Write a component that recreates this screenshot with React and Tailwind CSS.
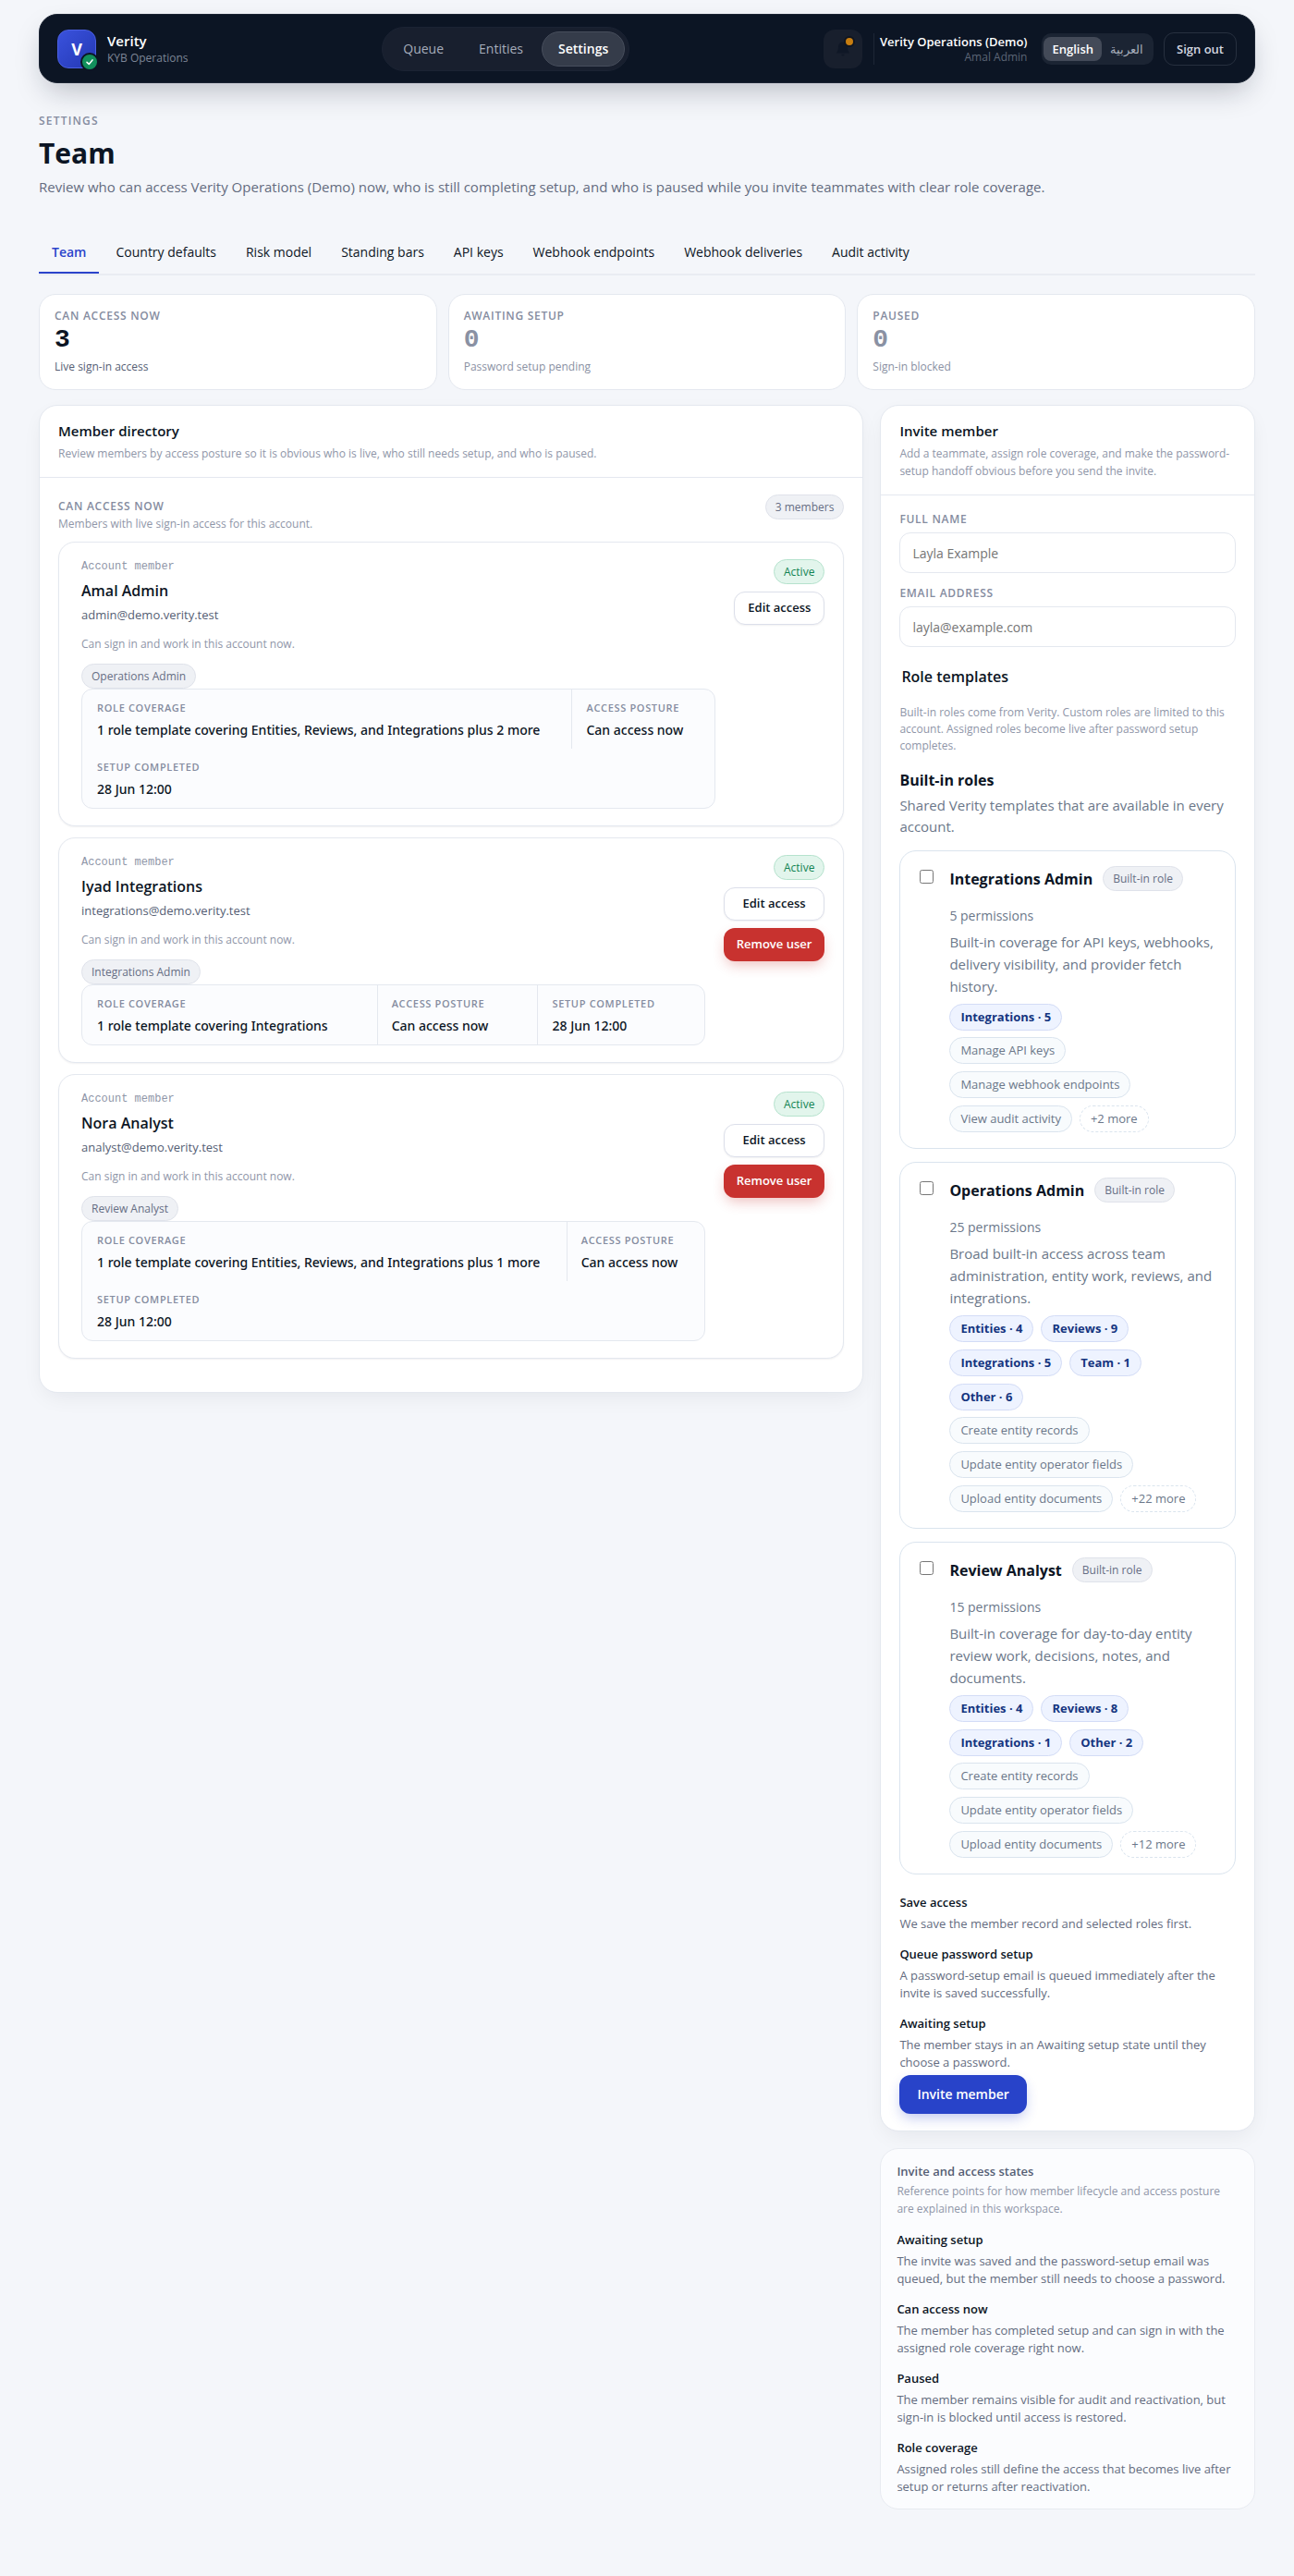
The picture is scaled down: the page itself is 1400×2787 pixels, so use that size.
import { useState } from 'react'

const NAV = ['Queue', 'Entities', 'Settings']

const TABS = [
  'Team',
  'Country defaults',
  'Risk model',
  'Standing bars',
  'API keys',
  'Webhook endpoints',
  'Webhook deliveries',
  'Audit activity',
]

const STATS = [
  { label: 'Can access now', value: 3, note: 'Live sign-in access' },
  { label: 'Awaiting setup', value: 0, note: 'Password setup pending' },
  { label: 'Paused', value: 0, note: 'Sign-in blocked' },
]

const MEMBERS = [
  {
    name: 'Amal Admin',
    email: 'admin@demo.verity.test',
    role: 'Operations Admin',
    coverage: '1 role template covering Entities, Reviews, and Integrations plus 2 more',
    removable: false,
  },
  {
    name: 'Iyad Integrations',
    email: 'integrations@demo.verity.test',
    role: 'Integrations Admin',
    coverage: '1 role template covering Integrations',
    removable: true,
  },
  {
    name: 'Nora Analyst',
    email: 'analyst@demo.verity.test',
    role: 'Review Analyst',
    coverage: '1 role template covering Entities, Reviews, and Integrations plus 1 more',
    removable: true,
  },
]

const ROLES = [
  {
    name: 'Integrations Admin',
    count: 5,
    description: 'Built-in coverage for API keys, webhooks, delivery visibility, and provider fetch history.',
    groups: ['Integrations · 5'],
    permissions: ['Manage API keys', 'Manage webhook endpoints', 'View audit activity'],
    more: 2,
  },
  {
    name: 'Operations Admin',
    count: 25,
    description: 'Broad built-in access across team administration, entity work, reviews, and integrations.',
    groups: ['Entities · 4', 'Reviews · 9', 'Integrations · 5', 'Team · 1', 'Other · 6'],
    permissions: ['Create entity records', 'Update entity operator fields', 'Upload entity documents'],
    more: 22,
  },
  {
    name: 'Review Analyst',
    count: 15,
    description: 'Built-in coverage for day-to-day entity review work, decisions, notes, and documents.',
    groups: ['Entities · 4', 'Reviews · 8', 'Integrations · 1', 'Other · 2'],
    permissions: ['Create entity records', 'Update entity operator fields', 'Upload entity documents'],
    more: 12,
  },
]

const STEPS = [
  { title: 'Save access', text: 'We save the member record and selected roles first.' },
  {
    title: 'Queue password setup',
    text: 'A password-setup email is queued immediately after the invite is saved successfully.',
  },
  {
    title: 'Awaiting setup',
    text: 'The member stays in an Awaiting setup state until they choose a password.',
  },
]

const STATES = [
  {
    title: 'Awaiting setup',
    text: 'The invite was saved and the password-setup email was queued, but the member still needs to choose a password.',
  },
  {
    title: 'Can access now',
    text: 'The member has completed setup and can sign in with the assigned role coverage right now.',
  },
  {
    title: 'Paused',
    text: 'The member remains visible for audit and reactivation, but sign-in is blocked until access is restored.',
  },
  {
    title: 'Role coverage',
    text: 'Assigned roles still define the access that becomes live after setup or returns after reactivation.',
  },
]

function Header() {
  const [lang, setLang] = useState('en')

  return (
    <header className="flex h-[75px] items-center justify-between rounded-[20px] border border-[#1b2433] bg-[#0c1524] px-[19px] shadow-[0_14px_32px_-8px_rgba(15,23,42,0.28)]">
      <div className="flex items-center gap-3">
        <div className="relative flex size-[42px] items-center justify-center rounded-xl border border-[#4a5fe0] bg-linear-to-br from-[#3a52dd] to-[#2438b4] text-lg font-bold text-white">
          V
          <span className="absolute -right-1 -bottom-1 flex size-5 items-center justify-center rounded-full border-2 border-[#0c1524] bg-[#12905c]">
            <svg viewBox="0 0 16 16" className="size-3" fill="none" stroke="#fff" strokeWidth="2" strokeLinecap="round" strokeLinejoin="round">
              <path d="M4 8.5 7 11.2 12 5.2" />
            </svg>
          </span>
        </div>
        <div>
          <div className="text-[15px] leading-5 font-semibold text-white">Verity</div>
          <div className="text-xs leading-[18px] text-[#7d8596]">KYB Operations</div>
        </div>
      </div>

      <nav className="flex gap-0.5 rounded-full border border-[#1b2333] bg-[#181f2e] p-1">
        {NAV.map((item) => (
          <a
            key={item}
            href="#"
            className={`rounded-full border px-[17px] py-2 text-sm leading-5 ${
              item === 'Settings'
                ? 'border-[#474e5c] bg-[#353c4a] font-semibold text-white'
                : 'border-transparent font-medium text-[#a6adbb]'
            }`}
          >
            {item}
          </a>
        ))}
      </nav>

      <div className="flex items-center">
        <button aria-label="Notifications" className="relative flex size-[42px] items-center justify-center rounded-xl bg-[#181f2d]">
          <svg viewBox="0 0 24 24" className="size-5" fill="#0f1726">
            <path d="M12 3a6 6 0 0 0-6 6c0 5-2 7-2.5 8.5h17C20 16 18 14 18 9a6 6 0 0 0-6-6zM10 19h4a2 2 0 0 1-4 0z" />
          </svg>
          <span className="absolute top-[7px] right-2 size-3 rounded-full border-2 border-[#10151f] bg-[#c77d10]" />
        </button>
        <div className="ml-3 border-l border-[#1d2636] pl-1.5 text-right">
          <div className="text-[13px] leading-[18px] font-semibold text-white">Verity Operations (Demo)</div>
          <div className="text-xs leading-4 text-[#5c6576]">Amal Admin</div>
        </div>
        <div className="ml-4 flex rounded-[10px] bg-[#1b2433] px-0.5 py-1">
          <button
            onClick={() => setLang('en')}
            className={`rounded-lg px-[9px] py-1 text-[13px] leading-[18px] ${lang === 'en' ? 'bg-[#434a58] font-semibold text-white' : 'text-[#a6adbb]'}`}
          >
            English
          </button>
          <button
            onClick={() => setLang('ar')}
            className={`rounded-lg px-[9px] py-1 text-[13px] leading-[18px] ${lang === 'ar' ? 'bg-[#434a58] font-semibold text-white' : 'text-[#a6adbb]'}`}
          >
            العربية
          </button>
        </div>
        <button className="ml-[11px] rounded-[11px] border border-[#27303f] px-[13px] py-2 text-[13px] leading-[18px] font-semibold text-[#d4d8e0]">
          Sign out
        </button>
      </div>
    </header>
  )
}

function StatCard({ label, value, note }) {
  return (
    <div className="rounded-[18px] border border-[#e4e8ef] bg-white px-4 py-[15px]">
      <div className="text-xs leading-4 font-semibold tracking-[0.06em] text-[#858ca0] uppercase">{label}</div>
      <div className={`font-['Liberation_Mono',monospace] text-[28px] leading-[36px] font-bold ${value ? 'text-[#0c1524]' : 'text-[#8a91a3]'}`}>
        {value}
      </div>
      <div className={`mt-0.5 text-xs leading-[18px] ${value ? 'text-[#555e74]' : 'text-[#8a91a3]'}`}>{note}</div>
    </div>
  )
}

function Pill({ children, tone = 'gray' }) {
  const tones = {
    gray: 'border-[#dfe2ea] bg-[#eff1f5] text-[#666e84]',
    green: 'border-[#b5e2cd] bg-[#e2f5ec] text-[#128453]',
  }
  return (
    <span className={`inline-flex h-[27px] items-center rounded-full border px-2.5 text-xs font-medium ${tones[tone]}`}>
      {children}
    </span>
  )
}

function PanelHeader({ title, text }) {
  return (
    <div className="border-b border-[#e4e8ef] px-5 py-4">
      <h2 className="text-[15px] leading-[22px] font-semibold text-[#0c1524]">{title}</h2>
      <p className="mt-1 text-xs leading-[19px] text-[#8f96a8]">{text}</p>
    </div>
  )
}

function MetaCell({ label, value }) {
  return (
    <div className="-mr-px flex-auto border-r border-[#e4e8ef] px-4 pt-3 pb-2.5">
      <dt className="text-[11px] leading-[15px] font-semibold tracking-[0.06em] text-[#858ca0] uppercase">{label}</dt>
      <dd className="mt-[7px] font-['Noto_Sans',sans-serif] text-sm leading-5 font-medium text-[#0c1524]">{value}</dd>
    </div>
  )
}

function MemberCard({ member }) {
  return (
    <article className="flex gap-5 rounded-[18px] border border-[#e4e8ef] bg-white py-[18px] pr-5 pl-6 shadow-[0_1px_2px_rgba(15,23,42,0.06)]">
      <div className="min-w-0 flex-1">
        <div className="font-['Liberation_Mono',monospace] text-xs leading-4 text-[#8f96a8]">Account member</div>
        <h3 className="mt-1.5 text-base leading-6 font-semibold text-[#0c1524]">{member.name}</h3>
        <div className="mt-1 text-[13px] leading-5 text-[#555e74]">{member.email}</div>
        <p className="mt-3 mb-3 text-xs leading-[19px] text-[#8f96a8]">Can sign in and work in this account now.</p>
        <div className="flex">
          <Pill>{member.role}</Pill>
        </div>
        <dl className="flex flex-wrap overflow-hidden rounded-xl border border-[#e4e8ef] bg-[#fbfcfe]">
          <MetaCell label="Role coverage" value={member.coverage} />
          <MetaCell label="Access posture" value="Can access now" />
          <MetaCell label="Setup completed" value="28 Jun 12:00" />
        </dl>
      </div>
      <div className="flex flex-col items-end gap-2">
        <Pill tone="green">Active</Pill>
        <button className="h-9 w-full rounded-xl border border-[#dcdfea] bg-white px-3.5 text-[13px] font-semibold text-[#0c1524] shadow-[0_1px_2px_rgba(15,23,42,0.06)]">
          Edit access
        </button>
        {member.removable && (
          <button className="h-9 w-full rounded-xl bg-[#c8322f] px-3.5 text-[13px] font-semibold text-white shadow-[0_6px_14px_-2px_rgba(200,50,47,0.3)]">
            Remove user
          </button>
        )}
      </div>
    </article>
  )
}

function Field({ id, label, type, placeholder }) {
  return (
    <div>
      <label htmlFor={id} className="block text-xs leading-4 font-semibold tracking-[0.06em] text-[#858ca0] uppercase">
        {label}
      </label>
      <input
        id={id}
        type={type}
        placeholder={placeholder}
        className="mt-1.5 h-11 w-full rounded-xl border border-[#e4e8ef] bg-white px-[13px] text-sm text-[#0c1524] outline-none placeholder:text-[#757575] focus:border-[#2b44cb]"
      />
    </div>
  )
}

function RoleCard({ role }) {
  return (
    <label className="flex rounded-[18px] border border-[#dae4ee] bg-white pt-4 pr-[17px] pb-[17px] pl-[21px]">
      <input type="checkbox" className="mt-1 mr-[17px] size-[15px] shrink-0" />
      <span className="min-w-0 flex-1">
        <span className="flex h-[27px] items-center gap-[11px]">
          <span className="text-base leading-6 font-bold text-[#0c1524]">{role.name}</span>
          <Pill>Built-in role</Pill>
        </span>
        <span className="mt-[15px] block text-sm leading-6 text-[#6b7789]">{role.count} permissions</span>
        <span className="mt-1 block text-[15px] leading-6 text-[#6b7789]">{role.description}</span>
        <span className="mt-[7px] flex flex-wrap gap-2">
          {role.groups.map((g) => (
            <span key={g} className="flex h-[29px] items-center rounded-full border border-[#d3dcf6] bg-[#eef3ff] px-[11px] text-[13px] font-bold text-[#15357f]">
              {g}
            </span>
          ))}
        </span>
        <span className="mt-[7px] flex flex-wrap gap-2">
          {role.permissions.map((p) => (
            <span key={p} className="flex h-[29px] items-center rounded-full border border-[#dae4ee] bg-[#f8fbfd] px-[11px] text-[13px] text-[#6b7789]">
              {p}
            </span>
          ))}
          <span className="flex h-[29px] items-center rounded-full border border-dashed border-[#dae4ee] px-[11px] text-[13px] text-[#6b7789]">
            +{role.more} more
          </span>
        </span>
      </span>
    </label>
  )
}

function Notes({ items }) {
  return (
    <dl className="flex flex-col gap-[13px]">
      {items.map((item) => (
        <div key={item.title}>
          <dt className="text-[13px] leading-5 font-semibold text-[#0c1524]">{item.title}</dt>
          <dd className="mt-1 text-[13px] leading-[19px] text-[#646c80]">{item.text}</dd>
        </div>
      ))}
    </dl>
  )
}

export default function App() {
  return (
    <div className="min-h-screen bg-[#f4f6fa] px-[3%] pt-[15px] pb-[71px] font-['Open_Sans','Noto_Sans',sans-serif] text-[#0c1524]">
      <Header />

      <main>
        <div className="mt-8">
          <div className="text-xs leading-[18px] font-semibold tracking-[0.1em] text-[#858ca0] uppercase">Settings</div>
          <h1 className="mt-1.5 text-[30px] leading-10 font-bold">Team</h1>
          <p className="mt-1 text-[15px] leading-6 text-[#646c80]">
            Review who can access Verity Operations (Demo) now, who is still completing setup, and who is paused while you invite teammates with clear role coverage.
          </p>
        </div>

        <nav className="mt-9 flex gap-1 border-b-2 border-[#e9ecf2]">
          {TABS.map((tab) => (
            <a
              key={tab}
              href="#"
              className={`border-b-2 px-3.5 pt-[13px] pb-[11px] text-sm leading-5 ${
                tab === 'Team' ? 'border-[#2b44cb] font-semibold text-[#2b44cb]' : 'border-transparent font-medium'
              }`}
            >
              {tab}
            </a>
          ))}
        </nav>

        <section className="mt-5 grid grid-cols-3 gap-3">
          {STATS.map((stat) => (
            <StatCard key={stat.label} {...stat} />
          ))}
        </section>

        <div className="mt-4 grid grid-cols-[minmax(0,2.2fr)_minmax(0,1fr)] items-start gap-[18px]">
          <section className="rounded-[20px] border border-[#e4e8ef] bg-white shadow-[0_8px_24px_-6px_rgba(15,23,42,0.08)]">
            <PanelHeader
              title="Member directory"
              text="Review members by access posture so it is obvious who is live, who still needs setup, and who is paused."
            />
            <div className="px-5 pt-[18px] pb-9">
              <div className="mb-2.5 flex items-start justify-between">
                <div className="pt-1">
                  <h3 className="text-xs leading-[18px] font-semibold tracking-[0.06em] text-[#858ca0] uppercase">Can access now</h3>
                  <p className="text-xs leading-[19px] text-[#8f96a8]">Members with live sign-in access for this account.</p>
                </div>
                <Pill>3 members</Pill>
              </div>
              <div className="flex flex-col gap-3">
                {MEMBERS.map((member) => (
                  <MemberCard key={member.email} member={member} />
                ))}
              </div>
            </div>
          </section>

          <div className="flex flex-col gap-[18px]">
            <section className="rounded-[20px] border border-[#e4e8ef] bg-white shadow-[0_8px_24px_-6px_rgba(15,23,42,0.08)]">
              <PanelHeader
                title="Invite member"
                text="Add a teammate, assign role coverage, and make the password-setup handoff obvious before you send the invite."
              />
              <form className="px-5 py-[18px]" onSubmit={(e) => e.preventDefault()}>
                <div className="flex flex-col gap-3.5">
                  <Field id="full-name" label="Full name" type="text" placeholder="Layla Example" />
                  <Field id="email" label="Email address" type="email" placeholder="layla@example.com" />
                </div>

                <fieldset className="mt-5">
                  <legend className="px-0.5 text-base leading-6 font-semibold">Role templates</legend>
                  <p className="mt-[18px] text-xs leading-[18px] text-[#8f96a8]">
                    Built-in roles come from Verity. Custom roles are limited to this account. Assigned roles become live after password setup completes.
                  </p>
                  <h3 className="mt-4 text-base leading-6 font-bold">Built-in roles</h3>
                  <p className="mt-1 text-[15px] leading-[23px] text-[#6b7789]">
                    Shared Verity templates that are available in every account.
                  </p>
                  <div className="mt-3.5 flex flex-col gap-3.5">
                    {ROLES.map((role) => (
                      <RoleCard key={role.name} role={role} />
                    ))}
                  </div>
                </fieldset>

                <div className="mt-5">
                  <Notes items={STEPS} />
                </div>
                <button className="mt-1 h-[42px] rounded-xl bg-[#2843c9] px-[19px] text-sm font-semibold text-white shadow-[0_6px_14px_-2px_rgba(40,67,201,0.3)]">
                  Invite member
                </button>
              </form>
            </section>

            <aside className="rounded-[20px] border border-[#e8ebf1] bg-[#fbfcfe] px-[17px] py-3.5">
              <h2 className="text-[13px] leading-5 font-semibold text-[#555e74]">Invite and access states</h2>
              <p className="mt-0.5 mb-3.5 text-xs leading-[19px] text-[#8f96a8]">
                Reference points for how member lifecycle and access posture are explained in this workspace.
              </p>
              <Notes items={STATES} />
            </aside>
          </div>
        </div>
      </main>
    </div>
  )
}
